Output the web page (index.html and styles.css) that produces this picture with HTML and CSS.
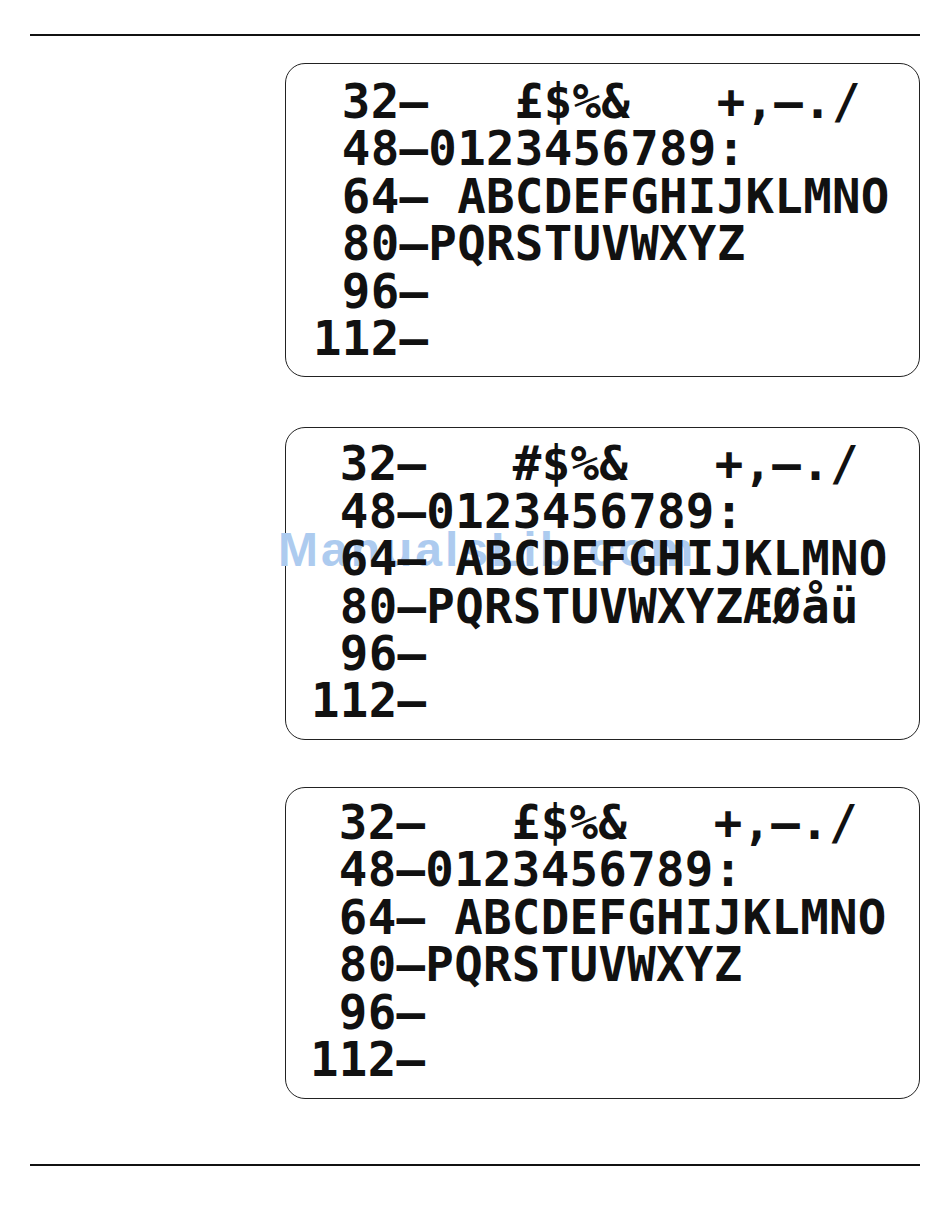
FILE: index.html
```html
<!DOCTYPE html>
<html lang="en">

<head>
    <meta charset="UTF-8">
    <title>Character sets</title>
    <link rel="stylesheet" href="styles.css">
</head>

<body>
    <div class="page">
        <div class="rule"></div>

        <div class="charts">
            <div class="chart chart-uk">
<pre class="chart-text"> 32–   £$%&amp;   +,–./
 48–0123456789:
 64– ABCDEFGHIJKLMNO
 80–PQRSTUVWXYZ
 96–
112–</pre>
            </div>

            <div class="chart chart-nordic">
                <div class="watermark">ManualsLib.com</div>
<pre class="chart-text"> 32–   #$%&amp;   +,–./
 48–0123456789:
 64– ABCDEFGHIJKLMNO
 80–PQRSTUVWXYZÆØåü
 96–
112–</pre>
            </div>

            <div class="chart chart-alt">
<pre class="chart-text"> 32–   £$%&amp;   +,–./
 48–0123456789:
 64– ABCDEFGHIJKLMNO
 80–PQRSTUVWXYZ
 96–
112–</pre>
            </div>
        </div>

        <div class="rule rule-bottom"></div>
    </div>
</body>

</html>
```

FILE: styles.css
```css
body {
    margin: 0;
    padding: 0;
    background: #fff;
    font-family: 'DejaVu Sans', sans-serif;
}

.page {
    padding: 34px 30px 0;
}

.rule {
    border-top: 2px solid #111;
}

.rule-bottom {
    margin-top: 65px;
}

.charts {
    display: flex;
    flex-direction: column;
    gap: 47px;
    margin: 27px 0 0 255px;
}

.chart {
    position: relative;
    border: 1.5px solid #222;
    border-radius: 20px;
    padding: 14px 0 14px 27px;
}

.chart-nordic {
    margin-top: 3px;
    padding: 12px 0 14px 25px;
}

.chart-alt {
    padding: 11px 0 15px 24px;
}

.chart-text {
    position: relative;
    margin: 0;
    font-family: 'DejaVu Sans Mono', monospace;
    font-weight: bold;
    font-size: 47.4px;
    line-height: 47.4px;
    letter-spacing: 0.3px;
    color: #111;
    white-space: pre;
}

.watermark {
    position: absolute;
    top: 98px;
    left: -8px;
    font-family: 'Liberation Sans', Arial, sans-serif;
    font-weight: bold;
    font-size: 48px;
    line-height: 1;
    letter-spacing: 3px;
    color: #adcbef;
    white-space: nowrap;
}
```
